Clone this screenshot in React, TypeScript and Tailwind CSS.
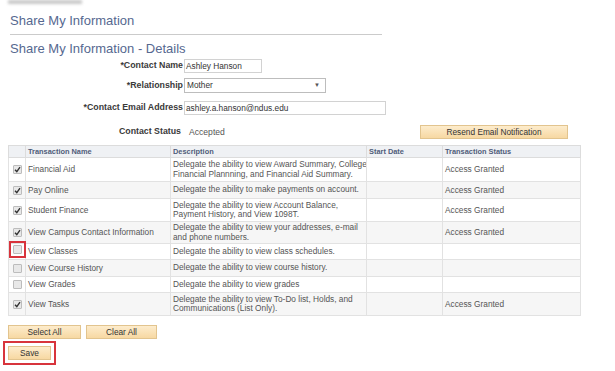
import React from 'react';

const rows: { name: string; desc: string[]; checked: boolean; h: string; status: string }[] = [
  {
    name: 'Financial Aid',
    desc: ['Delegate the ability to view Award Summary, College', 'Financial Plannning, and Financial Aid Summary.'],
    checked: true,
    h: 'h-[24px]',
    status: 'Access Granted',
  },
  { name: 'Pay Online', desc: ['Delegate the ability to make payments on account.'], checked: true, h: 'h-[17px]', status: 'Access Granted' },
  {
    name: 'Student Finance',
    desc: ['Delegate the ability to view Account Balance,', 'Payment History, and View 1098T.'],
    checked: true,
    h: 'h-[23px]',
    status: 'Access Granted',
  },
  {
    name: 'View Campus Contact Information',
    desc: ['Delegate the ability to view your addresses, e-mail', 'and phone numbers.'],
    checked: true,
    h: 'h-[22px]',
    status: 'Access Granted',
  },
  { name: 'View Classes', desc: ['Delegate the ability to view class schedules.'], checked: false, h: 'h-[16px]', status: '' },
  { name: 'View Course History', desc: ['Delegate the ability to view course history.'], checked: false, h: 'h-[17px]', status: '' },
  { name: 'View Grades', desc: ['Delegate the ability to view grades'], checked: false, h: 'h-[16px]', status: '' },
  {
    name: 'View Tasks',
    desc: ['Delegate the ability to view To-Do list, Holds, and', 'Communications (List Only).'],
    checked: true,
    h: 'h-[23px]',
    status: 'Access Granted',
  },
];

function Check({ checked }: { checked: boolean }) {
  return (
    <span className="flex w-[9px] h-[9px] items-center justify-center rounded-[1px] border border-[#bcbcbc] bg-[#e8e8e8]">
      {checked && (
        <svg width="7" height="7" viewBox="0 0 7 7" aria-hidden>
          <path d="M1 3.8 L2.8 5.6 L6 1.2" fill="none" stroke="#333" strokeWidth="1.4" />
        </svg>
      )}
    </span>
  );
}

function Btn({ label, w }: { label: string; w: string }) {
  return (
    <button
      type="button"
      className={`${w} h-[14px] border border-[#e2c48e] bg-gradient-to-b from-[#fdeccc] to-[#f7d8a2] text-[8.3px] leading-[12px] text-[#333] text-center`}
    >
      {label}
    </button>
  );
}

function Field({ label, children, mt }: { label: string; children: React.ReactNode; mt: string }) {
  return (
    <div className={`flex items-center ${mt}`}>
      <div className="w-[184px] pr-[1px] text-right text-[8.8px] font-bold text-[#3a3a3a]">{label}</div>
      {children}
    </div>
  );
}

export default function App() {
  return (
    <div className="w-[615px] h-[371px] overflow-hidden bg-white font-['Liberation_Sans',Arial,sans-serif]">
      <div className="ml-[8px] w-[74px] h-[4px] bg-[#c8c8c8] blur-[1.5px]" />
      <h1 className="mt-[9px] pl-[10px] text-[13px] leading-[15px] text-[#566890]">Share My Information</h1>
      <div className="mt-[6px] ml-[10px] w-[372px] h-px bg-[#cbcbcb]" />
      <h2 className="mt-[6px] pl-[10px] text-[13px] leading-[15px] text-[#566890]">Share My Information - Details</h2>

      <Field label="*Contact Name" mt="mt-[3px]">
        <div className="w-[78px] h-[14px] border border-[#d2d2d2] px-[1px] text-[8.3px] leading-[12px] text-[#333]">Ashley Hanson</div>
      </Field>
      <Field label="*Relationship" mt="mt-[5px]">
        <div className="flex w-[142px] h-[15px] items-center justify-between border border-[#bdbdbd] pl-[2px] pr-[5px] text-[8.3px] text-[#333]">
          <span>Mother</span>
          <span className="text-[6px] text-[#555]">▼</span>
        </div>
      </Field>
      <Field label="*Contact Email Address" mt="mt-[8px]">
        <div className="w-[202px] h-[14px] border border-[#d2d2d2] px-[1px] text-[8.3px] leading-[12px] text-[#333]">ashley.a.hanson@ndus.edu</div>
      </Field>

      <div className="mt-[10px] flex items-center">
        <div className="w-[181px] text-right text-[8.8px] font-bold text-[#3a3a3a]">Contact Status</div>
        <div className="ml-[8px] w-[231px] text-[8.6px] text-[#555]">Accepted</div>
        <Btn label="Resend Email Notification" w="w-[148px]" />
      </div>

      <table className="mt-[6px] ml-[8px] w-[572px] table-fixed border-collapse border border-[#d4d4d4] text-[8.3px] text-[#555]">
        <colgroup>
          <col className="w-[17px]" />
          <col className="w-[145px]" />
          <col className="w-[196px]" />
          <col className="w-[76px]" />
          <col className="w-[138px]" />
        </colgroup>
        <thead>
          <tr className="h-[12px] bg-[#eff1f4] text-left text-[7.4px] text-[#4f5d7a]">
            <th className="border border-[#dcdcdc]" />
            <th className="border border-[#dcdcdc] px-[2px] font-bold">Transaction Name</th>
            <th className="border border-[#dcdcdc] px-[2px] font-bold">Description</th>
            <th className="border border-[#dcdcdc] px-[2px] font-bold">Start Date</th>
            <th className="border border-[#dcdcdc] px-[2px] font-bold">Transaction Status</th>
          </tr>
        </thead>
        <tbody>
          {rows.map((r, i) => (
            <tr key={r.name} className={`${r.h} ${i % 2 === 1 ? 'bg-[#f6f6f6]' : 'bg-white'}`}>
              <td className="border border-[#e2e2e2] pl-[4px]">
                {r.name === 'View Classes' ? (
                  <span className="inline-flex outline-2 outline-offset-[2px] outline-[#d8343c]">
                    <Check checked={r.checked} />
                  </span>
                ) : (
                  <Check checked={r.checked} />
                )}
              </td>
              <td className="border border-[#e2e2e2] px-[2px] whitespace-nowrap">{r.name}</td>
              <td className="border border-[#e2e2e2] px-[2px] leading-[9.5px] whitespace-nowrap overflow-hidden">
                {r.desc.map((d) => (
                  <div key={d}>{d}</div>
                ))}
              </td>
              <td className="border border-[#e2e2e2]" />
              <td className="border border-[#e2e2e2] px-[2px]">{r.status}</td>
            </tr>
          ))}
        </tbody>
      </table>

      <div className="mt-[9px] ml-[8px] flex gap-[5px]">
        <Btn label="Select All" w="w-[73px]" />
        <Btn label="Clear All" w="w-[71px]" />
      </div>
      <div className="mt-[7px] ml-[8px] flex">
        <span className="flex outline-2 outline-offset-[3px] outline-[#d8343c]">
          <Btn label="Save" w="w-[43px]" />
        </span>
      </div>
    </div>
  );
}
